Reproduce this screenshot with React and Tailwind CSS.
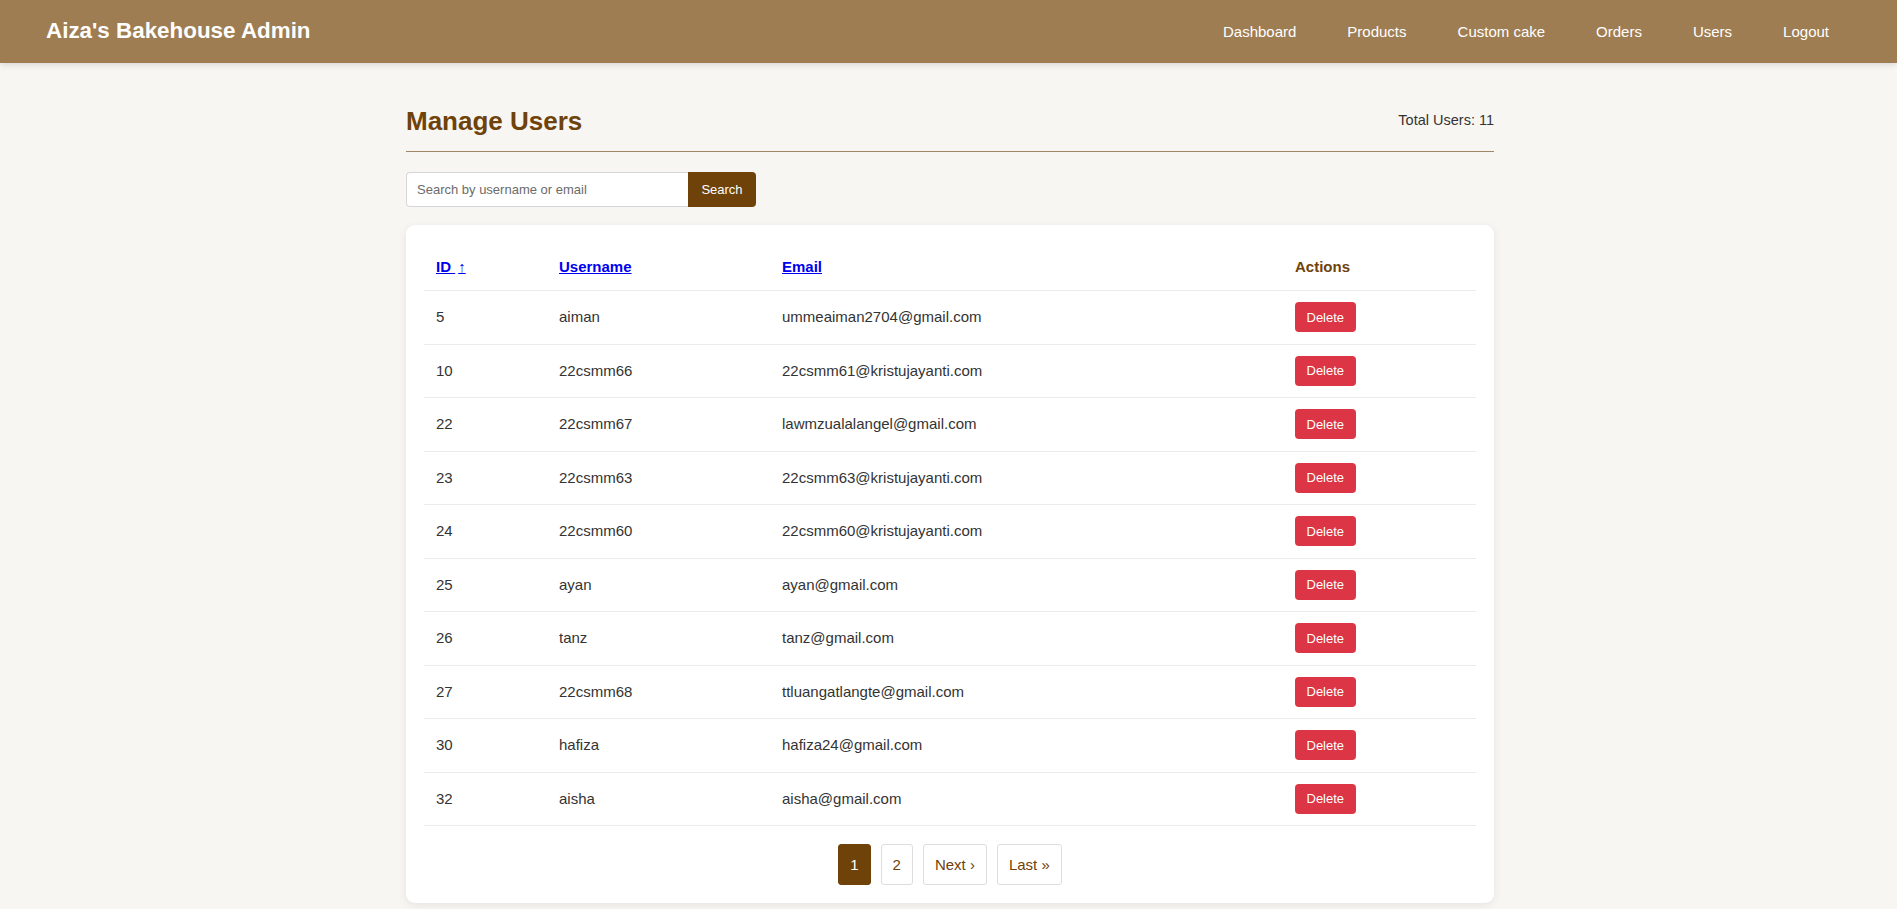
import React from "react";

const users = [
  { id: 5, username: "aiman", email: "ummeaiman2704@gmail.com" },
  { id: 10, username: "22csmm66", email: "22csmm61@kristujayanti.com" },
  { id: 22, username: "22csmm67", email: "lawmzualalangel@gmail.com" },
  { id: 23, username: "22csmm63", email: "22csmm63@kristujayanti.com" },
  { id: 24, username: "22csmm60", email: "22csmm60@kristujayanti.com" },
  { id: 25, username: "ayan", email: "ayan@gmail.com" },
  { id: 26, username: "tanz", email: "tanz@gmail.com" },
  { id: 27, username: "22csmm68", email: "ttluangatlangte@gmail.com" },
  { id: 30, username: "hafiza", email: "hafiza24@gmail.com" },
  { id: 32, username: "aisha", email: "aisha@gmail.com" },
];

const navLinks = ["Dashboard", "Products", "Custom cake", "Orders", "Users", "Logout"];

const App = () => {
  return (
    <div className="min-h-screen bg-[#f8f6f2] font-['Liberation_Sans',Arial,sans-serif] text-[#333]">
      {/* top bar */}
      <header className="h-[63px] bg-[#9f7d52] flex items-center justify-between pl-[46px] pr-[68px] shadow-[0_2px_6px_rgba(0,0,0,0.12)]">
        <h1 className="text-[22.4px] font-bold text-white leading-none">
          Aiza's Bakehouse Admin
        </h1>
        <nav className="flex items-center gap-[51px]">
          {navLinks.map((link) => (
            <a key={link} href="#" className="text-[15px] text-white leading-none">
              {link}
            </a>
          ))}
        </nav>
      </header>

      <main className="w-[1088px] ml-[406px] pt-[43px]">
        <div className="flex items-center justify-between pb-[15px] border-b border-[#9f8666]">
          <h2 className="text-[26px] leading-[30px] font-bold text-[#6f4209]">
            Manage Users
          </h2>
          <span className="text-[14.5px] text-[#333]">Total Users: 11</span>
        </div>

        <form className="flex mt-[20px]" onSubmit={(e) => e.preventDefault()}>
          <input
            type="text"
            placeholder="Search by username or email"
            className="w-[282px] h-[35px] px-[10px] text-[13px] bg-white border border-[#d6d6d6] border-r-0 rounded-l-[4px] outline-none placeholder:text-[#6b6b6b]"
          />
          <button className="w-[68px] h-[35px] bg-[#6f4209] text-white text-[13px] rounded-r-[4px]">
            Search
          </button>
        </form>

        <div className="mt-[18px] bg-white rounded-[9px] shadow-[0_2px_8px_rgba(0,0,0,0.08)] px-[18px] pt-[18px] pb-[18px]">
          <table className="w-full table-fixed border-collapse text-[15px]">
            <colgroup>
              <col className="w-[123px]" />
              <col className="w-[223px]" />
              <col className="w-[513px]" />
              <col className="w-[193px]" />
            </colgroup>
            <thead>
              <tr className="border-b border-[#e9ecef]">
                <th className="text-left px-[12px] py-[14.5px] leading-[18px] font-bold">
                  <a href="#" className="text-[#0000ee] underline">
                    ID <span className="ml-[3px] font-normal">↑</span>
                  </a>
                </th>
                <th className="text-left px-[12px] py-[14.5px] leading-[18px] font-bold">
                  <a href="#" className="text-[#0000ee] underline">Username</a>
                </th>
                <th className="text-left px-[12px] py-[14.5px] leading-[18px] font-bold">
                  <a href="#" className="text-[#0000ee] underline">Email</a>
                </th>
                <th className="text-left px-[12px] py-[14.5px] leading-[18px] font-bold text-[#6f4209]">
                  Actions
                </th>
              </tr>
            </thead>
            <tbody>
              {users.map((u) => (
                <tr key={u.id} className="border-b border-[#e9ecef]">
                  <td className="px-[12px] py-[11.25px] text-[#333]">{u.id}</td>
                  <td className="px-[12px] py-[11.25px] text-[#333]">{u.username}</td>
                  <td className="px-[12px] py-[11.25px] text-[#333]">{u.email}</td>
                  <td className="px-[12px] py-[11.25px]">
                    <button className="h-[30px] px-[11.5px] bg-[#dc3545] text-white text-[13px] rounded-[4px]">
                      Delete
                    </button>
                  </td>
                </tr>
              ))}
            </tbody>
          </table>

          <div className="flex justify-center gap-[10px] mt-[18px]">
            <span className="px-[11px] py-[11px] leading-[17px] text-[15px] bg-[#6f4209] text-white border border-[#6f4209] rounded-[3px]">
              1
            </span>
            <a href="#" className="px-[11px] py-[11px] leading-[17px] text-[15px] text-[#6f4209] bg-white border border-[#ddd] rounded-[3px]">
              2
            </a>
            <a href="#" className="px-[11px] py-[11px] leading-[17px] text-[15px] text-[#6f4209] bg-white border border-[#ddd] rounded-[3px]">
              Next ›
            </a>
            <a href="#" className="px-[11px] py-[11px] leading-[17px] text-[15px] text-[#6f4209] bg-white border border-[#ddd] rounded-[3px]">
              Last »
            </a>
          </div>
        </div>
      </main>
    </div>
  );
};

export default App;
